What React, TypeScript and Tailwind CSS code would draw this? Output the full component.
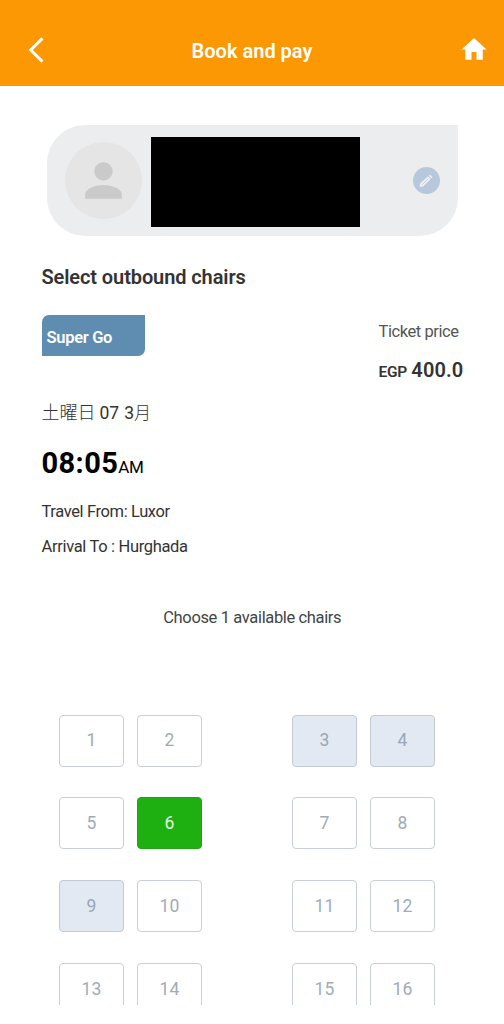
import React from "react";

type SeatState = "free" | "taken" | "selected";

const seatStyles: Record<SeatState, string> = {
  free: "border-[#c9ced8] bg-white text-[#a0abb9]",
  taken: "border-[#c3cad4] bg-[#e2e9f2] text-[#9aa6b5]",
  selected: "border-[#1fa414] bg-[#1db010] text-[#e4f8e2]",
};

const rows = [0, 1, 2, 3].map((r) => [1, 2, 3, 4].map((c) => r * 4 + c));
const taken = [3, 4, 9];

function Seat({ number }: { number: number }) {
  const state: SeatState = number === 6 ? "selected" : taken.includes(number) ? "taken" : "free";
  return (
    <button
      className={`flex h-[52px] w-[65px] items-center justify-center rounded-[4px] border-[1.5px] pt-px text-[17.5px] leading-none tracking-[0.2px] ${seatStyles[state]}`}
    >
      {number}
    </button>
  );
}

export default function App() {
  return (
    <div className="flex h-[1024px] w-[504px] flex-col overflow-hidden bg-white font-['Roboto','Noto_Sans_CJK_JP',sans-serif] text-[#333333]">
      <header className="grid h-[86px] shrink-0 grid-cols-[60px_1fr_60px] items-start bg-[#fc9803] pt-[36px] text-white">
        <svg className="ml-[27px] h-[28px] w-[28px]" viewBox="0 0 28 28" fill="none" stroke="currentColor" strokeWidth="3">
          <path d="M15.4 2.4 3.8 14l11.6 11.6" />
        </svg>
        <h1 className="h-[30px] text-center text-[20px] leading-[30px] font-semibold whitespace-nowrap">Book and pay</h1>
        <svg className="mt-[-2px] ml-[15px] h-[31px] w-[30px]" viewBox="0 0 24 24" preserveAspectRatio="none" fill="currentColor">
          <path d="M10 20v-6h4v6h5v-8h3L12 3 2 12h3v8z" />
        </svg>
      </header>

      <section className="mt-[39px] ml-[46.5px] flex h-[111px] w-[411.5px] shrink-0 items-center rounded-[38px] rounded-tr-none bg-[#ebedef] pl-[18px]">
        <div className="flex size-[77.5px] items-center justify-center rounded-full bg-[#e5e5e5]">
          <svg className="size-[55px] text-[#cacaca]" viewBox="0 0 24 24" fill="currentColor">
            <path d="M12 12c2.21 0 4-1.79 4-4s-1.79-4-4-4-4 1.79-4 4 1.79 4 4 4zm0 2c-2.67 0-8 1.34-8 4v2h16v-2c0-2.66-5.33-4-8-4z" />
          </svg>
        </div>
        <div className="mt-[2px] ml-[8.5px] h-[90px] w-[209.5px] bg-black" />
        <button className="ml-[52.5px] flex size-[27.5px] items-center justify-center rounded-full bg-[#b8c8dc]">
          <svg className="size-[14px]" viewBox="0 0 14 14" strokeLinejoin="round">
            <path d="M1.1 12.6 1.6 9.5 9 2.8 11.3 5.1 4.2 12Z" fill="#edf1f5" stroke="#edf1f5" strokeWidth=".9" />
            <path d="m10.2 1.8 1-.8 1.9 1.9-.9 1.1Z" fill="#edf1f5" stroke="#edf1f5" strokeWidth=".7" />
            <path d="m3 10.9 6.3-6" fill="none" stroke="#c6d2e1" strokeWidth="1" />
          </svg>
        </button>
      </section>

      <main className="flex flex-col pr-[41px] pl-[41.5px]">
        <h2 className="mt-[26px] h-[30px] text-[20px] leading-[30px] font-semibold">
          <span className="tracking-[-0.1px]">Select outbound chairs</span>
        </h2>

        <div className="mt-[23px] flex h-[70px] items-start justify-between">
          <div className="flex h-[41px] w-[103.5px] items-center rounded-tl-[7px] rounded-br-[7px] bg-[#5f8db2] pt-[4px] pl-[5px] text-[16.5px] leading-[22px] font-semibold text-white">
            <span className="tracking-[-0.3px]">Super Go</span>
          </div>
          <div className="w-[84.5px] whitespace-nowrap">
            <p className="mt-[5px] h-[24px] text-[16.5px] leading-[24px] text-[#555555]">
              <span className="tracking-[-0.42px]">Ticket price</span>
            </p>
            <p className="mt-[11px] flex h-[30px] items-baseline leading-[30px] font-semibold">
              <span className="text-[15.5px] tracking-[-0.3px]">EGP</span>
              <span className="ml-[4.5px] text-[20px] tracking-[0.1px]">400.0</span>
            </p>
          </div>
        </div>

        <p className="mt-[15px] flex h-[26px] items-baseline text-[17.5px] leading-[26px]">
          <span className="text-[18px] font-light">土曜日</span>
          <span className="ml-[4px]">07</span>
          <span className="ml-[5px]">3</span>
          <span className="text-[17px] font-light">月</span>
        </p>

        <p className="mt-[17px] flex h-[40px] items-baseline leading-[40px] text-black">
          <span className="text-[29px] font-bold tracking-[0.4px]">08:05</span>
          <span className="text-[17px] tracking-[-0.3px]">AM</span>
        </p>

        <p className="mt-[17px] h-[24px] text-[16.5px] leading-[24px]">
          <span className="tracking-[-0.38px]">Travel From: Luxor</span>
        </p>
        <p className="mt-[11px] h-[24px] text-[16.5px] leading-[24px]">
          <span className="tracking-[-0.33px]">Arrival To : Hurghada</span>
        </p>
        <p className="mt-[47px] h-[24px] text-center text-[16.5px] leading-[24px] text-[#444444]">
          <span className="tracking-[-0.36px]">Choose 1 available chairs</span>
        </p>
      </main>

      <section className="mt-[84.5px] ml-[59px] flex h-[290.5px] w-[376px] shrink-0 flex-col gap-[30.8px] overflow-hidden">
        {rows.map((row) => (
          <div key={row[0]} className="flex shrink-0 justify-between">
            {[row.slice(0, 2), row.slice(2)].map((pair) => (
              <div key={pair[0]} className="flex gap-[13px]">
                {pair.map((n) => (
                  <Seat key={n} number={n} />
                ))}
              </div>
            ))}
          </div>
        ))}
      </section>
    </div>
  );
}
